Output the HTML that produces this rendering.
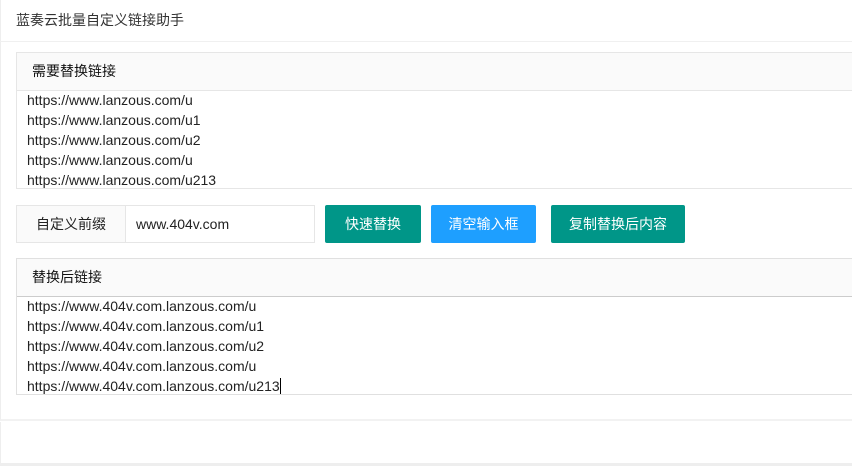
<!DOCTYPE html>
<html><head><meta charset="utf-8"><style>
body{margin:0;width:852px;height:466px;background:#fff;font-family:"Liberation Sans","Noto Sans CJK SC",sans-serif;color:#333;overflow:hidden;position:relative}
.card{position:absolute;left:0;top:0;width:860px;height:421px;border-left:1px solid #eee;border-bottom:2px solid #f2f2f2;box-sizing:border-box}
.ttl{position:absolute;left:16px;top:10px;font-size:14px;line-height:20px;color:#333}
.hr{position:absolute;left:0;top:41px;width:860px;height:1px;background:#f0f0f0}
.panel{position:absolute;left:16px;width:850px;border:1px solid #e6e6e6;box-sizing:border-box}
.ph{height:37px;background:#fafafa;border-bottom:1px solid #e6e6e6;font-size:14px;line-height:37px;padding-left:15px;color:#111}
.tx{font-size:14px;line-height:20px;padding-left:10px;color:#222;white-space:pre;margin-top:-1px}
.lab{position:absolute;left:16px;top:205px;width:110px;height:38px;box-sizing:border-box;border:1px solid #e6e6e6;background:#fafafa;font-size:14px;line-height:36px;text-align:center;color:#222}
.inp{position:absolute;left:125px;top:205px;width:190px;height:38px;box-sizing:border-box;border:1px solid #e6e6e6;font-size:14px;line-height:36px;padding-left:10px;color:#222}
.btn{position:absolute;top:205px;height:38px;color:#fff;font-size:14px;line-height:38px;text-align:center;border-radius:2px}
.bot{position:absolute;left:0;top:422px;width:860px;height:44px;border-left:1px solid #eee;border-bottom:3px solid #eee;box-sizing:border-box}
</style></head><body>
<div class="card"></div>
<div class="ttl">蓝奏云批量自定义链接助手</div>
<div class="hr"></div>
<div class="panel" style="top:52px;height:137px"><div class="ph">需要替换链接</div><div class="tx">https://www.lanzous.com/u
https://www.lanzous.com/u1
https://www.lanzous.com/u2
https://www.lanzous.com/u
https://www.lanzous.com/u213</div></div>
<div class="lab">自定义前缀</div>
<div class="inp">www.404v.com</div>
<div class="btn" style="left:325px;width:96px;background:#009688">快速替换</div>
<div class="btn" style="left:431px;width:105px;background:#1E9FFF">清空输入框</div>
<div class="btn" style="left:551px;width:134px;background:#009688">复制替换后内容</div>
<div class="panel" style="top:258px;height:137px;border-color:#e0e0e0"><div class="ph" style="border-bottom-color:#ccc">替换后链接</div><div class="tx">https://www.404v.com.lanzous.com/u
https://www.404v.com.lanzous.com/u1
https://www.404v.com.lanzous.com/u2
https://www.404v.com.lanzous.com/u
https://www.404v.com.lanzous.com/u213<span style="border-left:1px solid #000"></span></div></div>
<div class="bot"></div>
</body></html>
